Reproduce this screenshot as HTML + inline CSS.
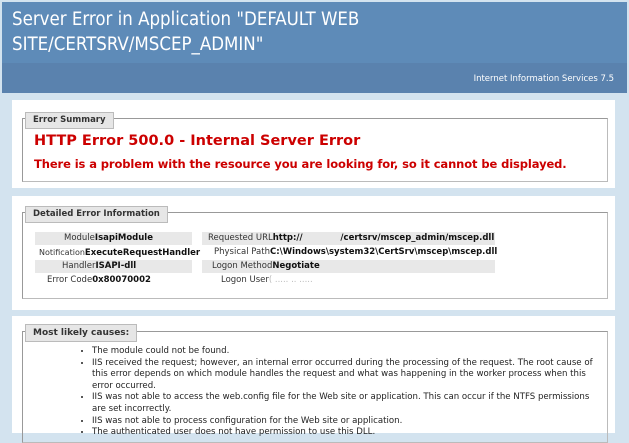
<!DOCTYPE html>
<html><head><style>
body{margin:0;width:629px;height:433px;overflow:hidden;background:#d3e3ef;font-family:"DejaVu Sans","Liberation Sans",sans-serif;position:relative}
.a{position:absolute}
.h1{left:2px;top:2px;width:625px;height:61px;background:#5e8bb8}
.h2{left:2px;top:63px;width:625px;height:30px;background:#5a82ae}
.t{left:12px;top:7px;color:#fff;font-size:18.5px;line-height:25px;font-family:"DejaVu Sans Condensed","DejaVu Sans",sans-serif}
.iis{right:15px;top:74px;color:#fff;font-size:8.5px}
.p{background:#fff;left:12px;width:603px}
.fs{border:1px solid #999;border-right-color:#bbb;border-bottom-color:#bbb;left:22px;width:584px}
.lg{background:#e6e6e6;border:1px solid #bbb;font-size:8.5px;font-weight:bold;color:#333;padding:0 7px;line-height:15px;left:25px}
.b{font-weight:bold;color:#111}
.row{font-size:8.5px;color:#333;height:13px;line-height:13px}
.g{background:#e8e8e8}
ul{margin:0;padding:0 0 0 12px;font-size:8.6px;line-height:11.6px;color:#222}
</style></head><body>
<div class="a h1"></div><div class="a h2"></div>
<div class="a t">Server Error in Application "DEFAULT WEB<br>SITE/CERTSRV/MSCEP_ADMIN"</div>
<div class="a iis">Internet Information Services 7.5</div>

<div class="a p" style="top:100px;height:88px"></div>
<div class="a fs" style="top:118px;height:62px"></div>
<div class="a lg" style="top:112px">Error Summary</div>
<div class="a" style="left:34px;top:133px;color:#c00;font-weight:bold;font-size:14.5px">HTTP Error 500.0 - Internal Server Error</div>
<div class="a" style="left:34px;top:157px;color:#c00;font-weight:bold;font-size:11.5px;letter-spacing:-0.1px">There is a problem with the resource you are looking for, so it cannot be displayed.</div>

<div class="a p" style="top:196px;height:114px"></div>
<div class="a fs" style="top:212px;height:85px"></div>
<div class="a lg" style="top:206px">Detailed Error Information</div>
<div class="a row g" style="left:35px;top:232px;width:157px"></div>
<div class="a row g" style="left:35px;top:260px;width:157px"></div>
<div class="a row g" style="left:202px;top:232px;width:293px"></div>
<div class="a row g" style="left:202px;top:260px;width:293px"></div>
<div class="a row" style="left:64px;top:232px">Module<span class="b">IsapiModule</span></div>
<div class="a row" style="left:39px;top:246px;font-size:8px">Notification<span class="b" style="font-size:8.5px">ExecuteRequestHandler</span></div>
<div class="a row" style="left:62px;top:260px">Handler<span class="b">ISAPI-dll</span></div>
<div class="a row" style="left:47px;top:274px">Error Code<span class="b">0x80070002</span></div>
<div class="a row" style="left:208px;top:232px">Requested URL<span class="b">http://<span style="color:#ccc;font-weight:normal">&nbsp;&nbsp;&nbsp;&nbsp;&nbsp;&nbsp;&nbsp;&nbsp;&nbsp;&nbsp;&nbsp;&nbsp;&nbsp;&nbsp;</span>/certsrv/mscep_admin/mscep.dll</span></div>
<div class="a row" style="left:214px;top:246px">Physical Path<span class="b">C:\Windows\system32\CertSrv\mscep\mscep.dll</span></div>
<div class="a row" style="left:212px;top:260px">Logon Method<span class="b">Negotiate</span></div>
<div class="a row" style="left:221px;top:274px">Logon User<span style="color:#bbb">( ..... .. .....</span></div>

<div class="a p" style="top:316px;height:117px"></div>
<div class="a fs" style="top:331px;height:110px"></div>
<div class="a lg" style="top:324px;font-size:9px;line-height:16px">Most likely causes:</div>
<div class="a" style="left:80px;top:346px;width:520px">
<ul>
<li>The module could not be found.</li>
<li>IIS received the request; however, an internal error occurred during the processing of the request. The root cause of this error depends on which module handles the request and what was happening in the worker process when this error occurred.</li>
<li>IIS was not able to access the web.config file for the Web site or application. This can occur if the NTFS permissions are set incorrectly.</li>
<li>IIS was not able to process configuration for the Web site or application.</li>
<li>The authenticated user does not have permission to use this DLL.</li>
</ul></div>
</body></html>
